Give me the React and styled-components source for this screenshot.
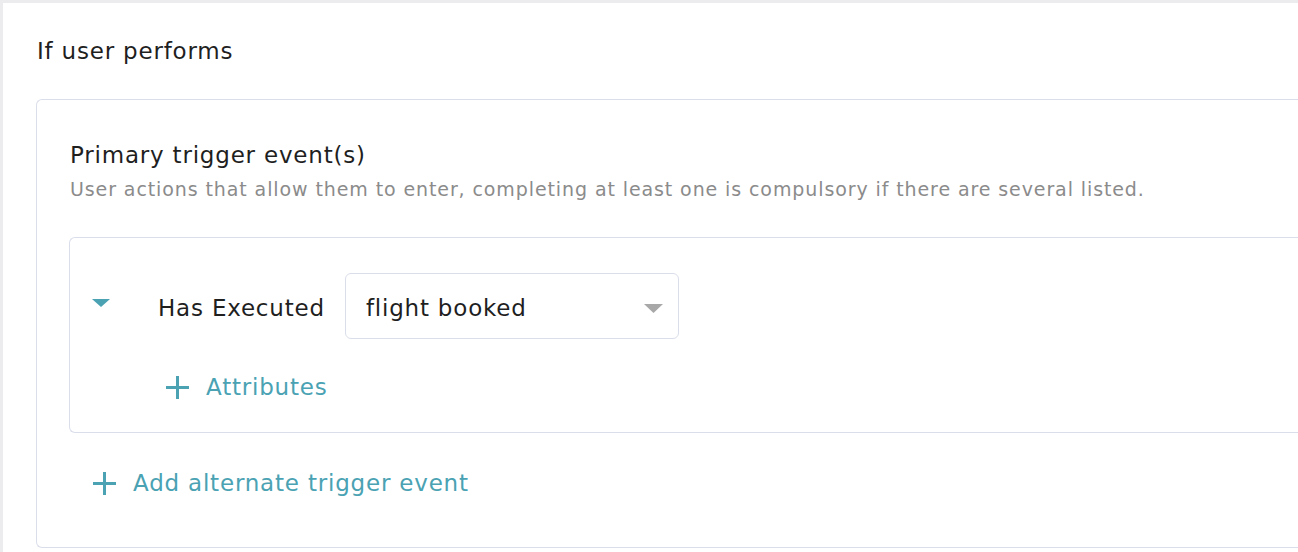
import styled, { createGlobalStyle } from "styled-components";

const colors = {
    text: '#1f1f1f',
    muted: '#8b8b8b',
    teal: '#4aa2b3',
    border: '#dadeea',
    caret: '#a8a8a8',
};

const GlobalStyle = createGlobalStyle`
    body {
        margin: 0;
        background: #ececef;
        font-family: 'DejaVu Sans', 'Noto Sans', sans-serif;
        overflow: hidden;
    }
`;

export default function App() {
    return (
        <>
            <GlobalStyle />
            <Page>
                <SectionTitle>If user performs</SectionTitle>
                <Card>
                    <CardTitle>Primary trigger event(s)</CardTitle>
                    <CardHint>
                        User actions that allow them to enter, completing at least one is compulsory if there are several listed.
                    </CardHint>
                    <EventBox>
                        <EventRow>
                            <Toggle aria-label="collapse">
                                <svg width="18" height="8" viewBox="0 0 18 8">
                                    <path d="M0 0 H18 L9 8 Z" fill={colors.teal} />
                                </svg>
                            </Toggle>
                            <Label>Has Executed</Label>
                            <Select>
                                <span>flight booked</span>
                                <svg width="19" height="9" viewBox="0 0 19 9">
                                    <path d="M0 0 H19 L9.5 9 Z" fill={colors.caret} />
                                </svg>
                            </Select>
                        </EventRow>
                        <AddLink $indent="74px" $top="33px">
                            <Plus />
                            Attributes
                        </AddLink>
                    </EventBox>
                    <AddLink $indent="23px" $top="35px">
                        <Plus />
                        Add alternate trigger event
                    </AddLink>
                </Card>
            </Page>
        </>
    )
}

function Plus() {
    return (
        <PlusIcon width="23" height="23" viewBox="0 0 23 23">
            <path d="M11.5 0 V23 M0 11.5 H23" stroke={colors.teal} strokeWidth="3" />
        </PlusIcon>
    )
}

const Page = styled.div`
    margin: 3px 0 0 3px;
    min-height: 560px;
    background: #fff;
    padding: 33px 0 0 33px;
    overflow: hidden;
`;

const SectionTitle = styled.h2`
    margin: 0 0 33px 1px;
    font-size: 23px;
    line-height: 30px;
    font-weight: 400;
    letter-spacing: 0.8px;
    color: ${colors.text};
`;

const Card = styled.div`
    border: 1.5px solid ${colors.border};
    border-right: none;
    border-radius: 6px 0 0 6px;
    padding: 40px 0 49px 33px;
`;

const CardTitle = styled.h3`
    margin: 0;
    font-size: 23px;
    line-height: 30px;
    font-weight: 400;
    letter-spacing: 0.8px;
    color: ${colors.text};
`;

const CardHint = styled.p`
    margin: 7px 0 36px;
    font-size: 19px;
    line-height: 24px;
    letter-spacing: 0.9px;
    color: ${colors.muted};
`;

const EventBox = styled.div`
    margin-left: -1px;
    border: 1.5px solid ${colors.border};
    border-right: none;
    border-radius: 6px 0 0 6px;
    padding: 35px 0 30px 22px;
`;

const EventRow = styled.div`
    display: flex;
    align-items: center;
`;

const Toggle = styled.button`
    display: flex;
    padding: 0;
    border: none;
    background: none;
    margin: 0 48px 6px 0;
    cursor: pointer;
`;

const Label = styled.span`
    padding-top: 4px;
    font-size: 23px;
    letter-spacing: 0.8px;
    color: ${colors.text};
    margin-right: 20px;
`;

const Select = styled.div`
    box-sizing: border-box;
    width: 334px;
    height: 66px;
    display: flex;
    align-items: center;
    justify-content: space-between;
    padding: 4px 15px 0 20px;
    border: 1.5px solid ${colors.border};
    border-radius: 6px;
    font-size: 23px;
    letter-spacing: 0.8px;
    color: ${colors.text};
`;

const AddLink = styled.div`
    display: flex;
    align-items: center;
    gap: 17px;
    margin: ${p => p.$top} 0 0 ${p => p.$indent};
    font-size: 23px;
    line-height: 30px;
    letter-spacing: 0.8px;
    color: ${colors.teal};
    cursor: pointer;
`;

const PlusIcon = styled.svg`
    flex-shrink: 0;
`;
